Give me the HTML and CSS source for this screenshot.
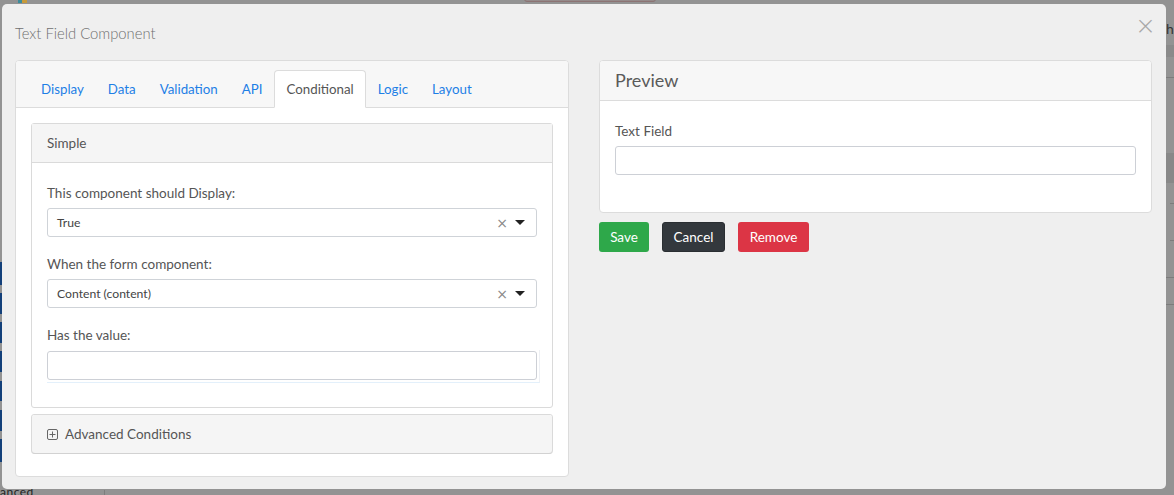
FILE: index.html
```html
<!DOCTYPE html>
<html>
<head>
<meta charset="utf-8">
<link rel="stylesheet" href="styles.css">
</head>
<body>
<div class="backdrop">
  <div class="bd-logo"></div>
  <div class="bd-topbtn"></div>
  <div class="bd-side">
    <span class="bd-bar b1"></span><span class="bd-bar b2"></span><span class="bd-bar b3"></span><span class="bd-bar b4"></span><span class="bd-bar b5"></span><span class="bd-bar b6"></span><span class="bd-bar b7"></span>
  </div>
  <div class="bd-bottom">anced</div>
  <div class="bd-vline"></div>
  <div class="bd-right">
    <span class="bd-h">h</span>
  </div>
</div>
<div class="modal">
  <div class="modal-head">
    <div class="modal-title">Text Field Component</div>
    <button class="close" aria-label="Close">×</button>
  </div>
  <div class="modal-grid">
    <div class="card edit-card">
      <div class="card-header tabs-header">
        <ul class="tabs">
          <li class="tab"><a>Display</a></li>
          <li class="tab"><a>Data</a></li>
          <li class="tab"><a>Validation</a></li>
          <li class="tab"><a>API</a></li>
          <li class="tab active"><a>Conditional</a></li>
          <li class="tab"><a>Logic</a></li>
          <li class="tab"><a>Layout</a></li>
        </ul>
      </div>
      <div class="card-body edit-body">
        <div class="panel">
          <div class="panel-head">Simple</div>
          <div class="panel-body">
            <div class="form-group">
              <label class="label">This component should Display:</label>
              <div class="select">
                <span class="select-value">True</span>
                <span class="select-clear">×</span>
                <span class="caret"></span>
              </div>
            </div>
            <div class="form-group">
              <label class="label">When the form component:</label>
              <div class="select">
                <span class="select-value">Content (content)</span>
                <span class="select-clear">×</span>
                <span class="caret"></span>
              </div>
            </div>
            <div class="form-group last">
              <label class="label">Has the value:</label>
              <div class="input-wrap">
                <div class="input"></div>
              </div>
            </div>
          </div>
        </div>
        <div class="panel collapsed">
          <div class="panel-head adv">
            <svg class="plus" width="11" height="11" viewBox="0 0 11 11"><rect x="0.5" y="0.5" width="10" height="10" rx="1.5" fill="none" stroke="#666" stroke-width="1"/><path d="M5.5 2.5v6M2.5 5.5h6" stroke="#666" stroke-width="1"/></svg>
            <span>Advanced Conditions</span>
          </div>
        </div>
      </div>
    </div>
    <div class="right-col">
      <div class="card preview-card">
        <div class="card-header preview-head">Preview</div>
        <div class="card-body preview-body">
          <div class="form-group">
            <label class="label">Text Field</label>
            <div class="input"></div>
          </div>
        </div>
      </div>
      <div class="buttons">
        <button class="btn btn-save">Save</button>
        <button class="btn btn-cancel">Cancel</button>
        <button class="btn btn-remove">Remove</button>
      </div>
    </div>
  </div>
</div>
</body>
</html>
```
FILE: styles.css
```css
* { box-sizing: border-box; }
html, body { margin: 0; padding: 0; }
body {
  width: 1174px;
  height: 495px;
  overflow: hidden;
  background: #939393;
  font-family: Lato, "Open Sans", "Liberation Sans", sans-serif;
  color: #555;
  position: relative;
}

/* dimmed page behind the modal */
.backdrop { position: absolute; inset: 0; z-index: 0; }
.bd-logo { position: absolute; left: 18px; top: 0; width: 9px; height: 3px; background: linear-gradient(90deg, #3c8c9c 0 50%, #c89a3a 50%); }
.bd-topbtn { position: absolute; left: 524px; top: -6px; width: 132px; height: 8px; border: 1px solid #8c7474; border-radius: 3px; background: #958a8a; }
.bd-side { position: absolute; left: 0; top: 0; width: 4px; height: 495px; }
.bd-bar { position: absolute; left: 0; width: 3px; background: #13407a; }
.b1 { top: 262px; height: 23px; }
.b2 { top: 293px; height: 21px; }
.b3 { top: 322px; height: 21px; }
.b4 { top: 351px; height: 21px; }
.b5 { top: 381px; height: 20px; }
.b6 { top: 410px; height: 21px; }
.b7 { top: 439px; height: 23px; }
.bd-bottom { position: absolute; left: 0; top: 485px; font-size: 12px; line-height: 14px; color: #222; letter-spacing: 0.5px; }
.bd-vline { position: absolute; left: 104px; top: 490px; width: 1px; height: 5px; background: #7d7d7d; }
.bd-right { position: absolute; left: 1166px; top: 0; width: 8px; height: 495px;
  background:
    linear-gradient(#8a8a8a, #8a8a8a) 0 45px / 8px 12px no-repeat,
    linear-gradient(#7c7c7c, #7c7c7c) 0 77px / 8px 1px no-repeat,
    linear-gradient(#888, #888) 0 153px / 8px 30px no-repeat,
    linear-gradient(#7c7c7c, #7c7c7c) 0 182px / 8px 1px no-repeat,
    linear-gradient(#7c7c7c, #7c7c7c) 4px 203px / 4px 1px no-repeat,
    linear-gradient(#7c7c7c, #7c7c7c) 4px 240px / 4px 1px no-repeat,
    linear-gradient(#7c7c7c, #7c7c7c) 0 277px / 8px 1px no-repeat,
    linear-gradient(#7c7c7c, #7c7c7c) 0 304px / 8px 1px no-repeat;
}
.bd-h { position: absolute; left: 0; top: 20px; font-size: 14px; color: #333; }

/* modal */
.modal {
  position: absolute;
  z-index: 1;
  left: 2px;
  top: 4px;
  width: 1164px;
  height: 485px;
  background: #efefef;
  border-radius: 5px;
  padding: 0 14px 0 13px;
}
.modal-head {
  height: 56px;
  display: flex;
  align-items: center;
  justify-content: space-between;
  padding-top: 2px;
}
.modal-title {
  font-size: 14.8px;
  color: #707070;
  font-weight: 300;
}
.close {
  border: 0;
  background: none;
  padding: 0;
  margin: -16px -4px 0 0;
  font-family: "DejaVu Sans", sans-serif;
  font-size: 25px;
  line-height: 1;
  color: #a8a8a8;
  font-weight: 300;
}
.modal-grid {
  display: grid;
  grid-template-columns: 554px 553px;
  column-gap: 30px;
  align-items: start;
}

.card {
  background: #fff;
  border: 1px solid #dcdcdc;
  border-radius: 4px;
}
.card-header {
  background: #f7f7f7;
  border-bottom: 1px solid #dcdcdc;
  border-radius: 3px 3px 0 0;
}

/* tabs */
.tabs-header { padding: 9px 0 0 13px; height: 47px; }
.tabs { list-style: none; margin: 0 0 -1px; padding: 0; display: flex; }
.tab a {
  display: block;
  height: 38px;
  line-height: 37px;
  padding: 0 11px;
  font-size: 13.3px;
  color: #1e7fe6;
  border: 1px solid transparent;
  border-radius: 4px 4px 0 0;
}
.tab.active a {
  color: #555;
  background: #fff;
  border-color: #dcdcdc #dcdcdc #fff;
}

.edit-body { padding: 15px 15px 22px; }
.edit-card { height: 417px; }

.panel {
  border: 1px solid #dadada;
  border-radius: 3px;
  background: #fff;
}
.panel-head {
  background: #f5f5f5;
  border-bottom: 1px solid #dadada;
  height: 39px;
  line-height: 38px;
  padding: 0 15px;
  font-size: 13.5px;
  color: #555;
}
.panel-body { padding: 20px 15px 24px; }
.panel.collapsed { margin-top: 6px; }
.panel.collapsed .panel-head { border-bottom: 0; height: 38px; display: flex; align-items: center; gap: 7px; border-radius: 3px; box-shadow: 0 1px 0 #d2d2d2; }
.plus { display: block; }

.form-group { margin-bottom: 17px; }
.form-group.last { margin-bottom: 0; }
.label {
  display: block;
  font-size: 13.5px;
  line-height: 19px;
  padding-top: 1px;
  color: #555;
  margin-bottom: 5px;
}
.select {
  position: relative;
  height: 29px;
  border: 1px solid #cfd3d8;
  border-radius: 3px;
  display: flex;
  align-items: center;
  padding: 0 11px 0 9px;
  font-size: 12.2px;
  color: #444;
}
.select-value { flex: 1; }
.select-clear {
  font-family: "DejaVu Sans", sans-serif;
  font-size: 14px;
  color: #888;
  margin-right: 7px;
  line-height: 1;
}
.caret {
  width: 0; height: 0;
  border-left: 5px solid transparent;
  border-right: 5px solid transparent;
  border-top: 5px solid #222;
}
.input {
  height: 29px;
  border: 1px solid #cdd0d6;
  border-radius: 3px;
  background: #fff;
}
.input-wrap {
  padding-top: 1px;
  border-bottom: 1px solid #e3f0fb;
  padding-bottom: 2px;
  border-right: 1px solid #eef0f4;
  margin-right: -3px;
  padding-right: 2px;
}

/* preview */
.preview-head {
  height: 40px;
  line-height: 39px;
  padding: 0 15px;
  font-size: 18px;
  color: #5a5a5a;
}
.preview-body { padding: 20px 15px 20px; }
.preview-body .form-group { margin-bottom: 16px; }
.preview-card { height: 153px; }

.buttons { display: flex; gap: 13px; margin-top: 9px; }
.btn {
  height: 30px;
  border: 0;
  border-radius: 3px;
  padding: 0 8px;
  font-family: Lato, "Open Sans", sans-serif;
  font-size: 13.5px;
  color: #fff;
}
.btn-save { background: #2ea84a; width: 50px; }
.btn-cancel { background: #33383d; width: 63px; border: 1px solid #2a2e32; }
.btn-remove { background: #dc3545; width: 71px; }
```
